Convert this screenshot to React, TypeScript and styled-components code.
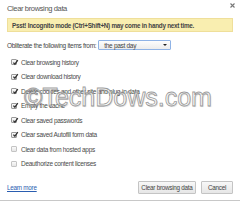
import styled, { createGlobalStyle } from 'styled-components'

const Global = createGlobalStyle`
  html, body {
    margin: 0;
    padding: 0;
    background: #fff;
  }
  #root {
    width: 240px;
    height: 201px;
    overflow: hidden;
  }
`

const Dialog = styled.div`
  position: relative;
  width: 240px;
  height: 201px;
  box-sizing: border-box;
  padding: 0 7px;
  display: flex;
  flex-direction: column;
  font-family: 'Liberation Sans', Arial, sans-serif;
  color: #333;
  border-bottom: 1px solid #c8c8c8;
`

const Header = styled.div`
  height: 18px;
  display: flex;
  align-items: center;
  justify-content: space-between;
`

const Title = styled.div`
  font-size: 7.6px;
  letter-spacing: -0.4px;
  color: #555;
  margin-top: -1px;
`

const Close = styled.div`
  width: 8px;
  height: 8px;
  margin-top: -7px;
  margin-right: -3px;
  display: flex;
  align-items: center;
  justify-content: center;
`

const Banner = styled.div`
  height: 14px;
  box-sizing: border-box;
  background: #f9eeb0;
  border: 1px solid #efdf9a;
  display: flex;
  align-items: center;
  padding-left: 4px;
  font-weight: bold;
  font-size: 6.3px;
  letter-spacing: -0.25px;
  color: #444;
`

const RangeRow = styled.div`
  margin-top: 8px;
  height: 10px;
  display: flex;
  align-items: center;
  gap: 2px;
  font-size: 6.5px;
  letter-spacing: -0.3px;
  color: #444;
`

const Select = styled.div`
  width: 73px;
  height: 10px;
  box-sizing: border-box;
  border: 1px solid #8fb3e6;
  border-radius: 1px;
  background: linear-gradient(#fdfdfd, #ececec);
  display: flex;
  align-items: center;
  justify-content: space-between;
  padding: 0 3px 0 5px;
  color: #444;
`

const Arrow = styled.div`
  width: 0;
  height: 0;
  border-left: 2px solid transparent;
  border-right: 2px solid transparent;
  border-top: 2.5px solid #222;
`

const List = styled.div`
  margin-top: 4.75px;
  display: flex;
  flex-direction: column;
`

const Item = styled.label`
  height: 14.5px;
  display: flex;
  align-items: center;
  gap: 4px;
  padding-left: 4px;
  font-size: 6.5px;
  letter-spacing: -0.3px;
  color: #4a4a4a;
`

const Box = styled.span<{ $checked: boolean }>`
  width: 6px;
  height: 6px;
  box-sizing: border-box;
  border: 1px solid ${(p) => (p.$checked ? '#9a9a9a' : '#c4c4c4')};
  border-radius: 1px;
  background: linear-gradient(#fafafa, #e6e6e6);
  position: relative;
  flex: none;

  svg {
    position: absolute;
    left: -0.5px;
    top: -1.5px;
  }
`

const Footer = styled.div`
  margin-top: 10.25px;
  height: 13px;
  display: flex;
  align-items: center;
  gap: 5px;
  font-size: 6.3px;
  letter-spacing: -0.25px;
`

const Link = styled.a`
  color: #2a5db0;
  text-decoration: underline;
  margin-right: auto;
`

const Button = styled.button<{ $width: number }>`
  width: ${(p) => p.$width}px;
  height: 13px;
  box-sizing: border-box;
  padding: 0;
  border: 1px solid #c4c4c4;
  border-radius: 1px;
  background: linear-gradient(#f8f8f8, #e6e6e6);
  font-family: inherit;
  font-size: 6.3px;
  letter-spacing: -0.25px;
  color: #444;
`

const Watermark = styled.div`
  position: absolute;
  left: 24px;
  top: 83px;
  font-family: 'Liberation Sans', Arial, sans-serif;
  font-size: 25px;
  color: rgba(255, 255, 255, 0.6);
  -webkit-text-stroke: 0.8px rgba(120, 120, 120, 0.75);
  text-shadow: 1px 1px 1px rgba(0, 0, 0, 0.15);
  pointer-events: none;
  white-space: nowrap;
`

const items: [string, boolean][] = [
  ['Clear browsing history', true],
  ['Clear download history', true],
  ['Delete cookies and other site and plug-in data', true],
  ['Empty the cache', true],
  ['Clear saved passwords', true],
  ['Clear saved Autofill form data', true],
  ['Clear data from hosted apps', false],
  ['Deauthorize content licenses', false],
]

function Check() {
  return (
    <svg width="7" height="7" viewBox="0 0 7 7">
      <path d="M1.4 3.6 L2.9 5.2 L5.8 1.2" fill="none" stroke="#333" strokeWidth="1.3" />
    </svg>
  )
}

export default function App() {
  return (
    <>
      <Global />
      <Dialog>
        <Header>
          <Title>Clear browsing data</Title>
          <Close>
            <svg width="5" height="5" viewBox="0 0 5 5">
              <path d="M0.5 0.5 L4.5 4.5 M4.5 0.5 L0.5 4.5" stroke="#777" strokeWidth="1.1" />
            </svg>
          </Close>
        </Header>
        <Banner>Psst! Incognito mode (Ctrl+Shift+N) may come in handy next time.</Banner>
        <RangeRow>
          <span>Obliterate the following items from:</span>
          <Select>
            <span>the past day</span>
            <Arrow />
          </Select>
        </RangeRow>
        <List>
          {items.map(([text, checked]) => (
            <Item key={text}>
              <Box $checked={checked}>{checked && <Check />}</Box>
              <span>{text}</span>
            </Item>
          ))}
        </List>
        <Footer>
          <Link>Learn more</Link>
          <Button $width={58}>Clear browsing data</Button>
          <Button $width={32}>Cancel</Button>
        </Footer>
        <Watermark>©TechDows.com</Watermark>
      </Dialog>
    </>
  )
}
